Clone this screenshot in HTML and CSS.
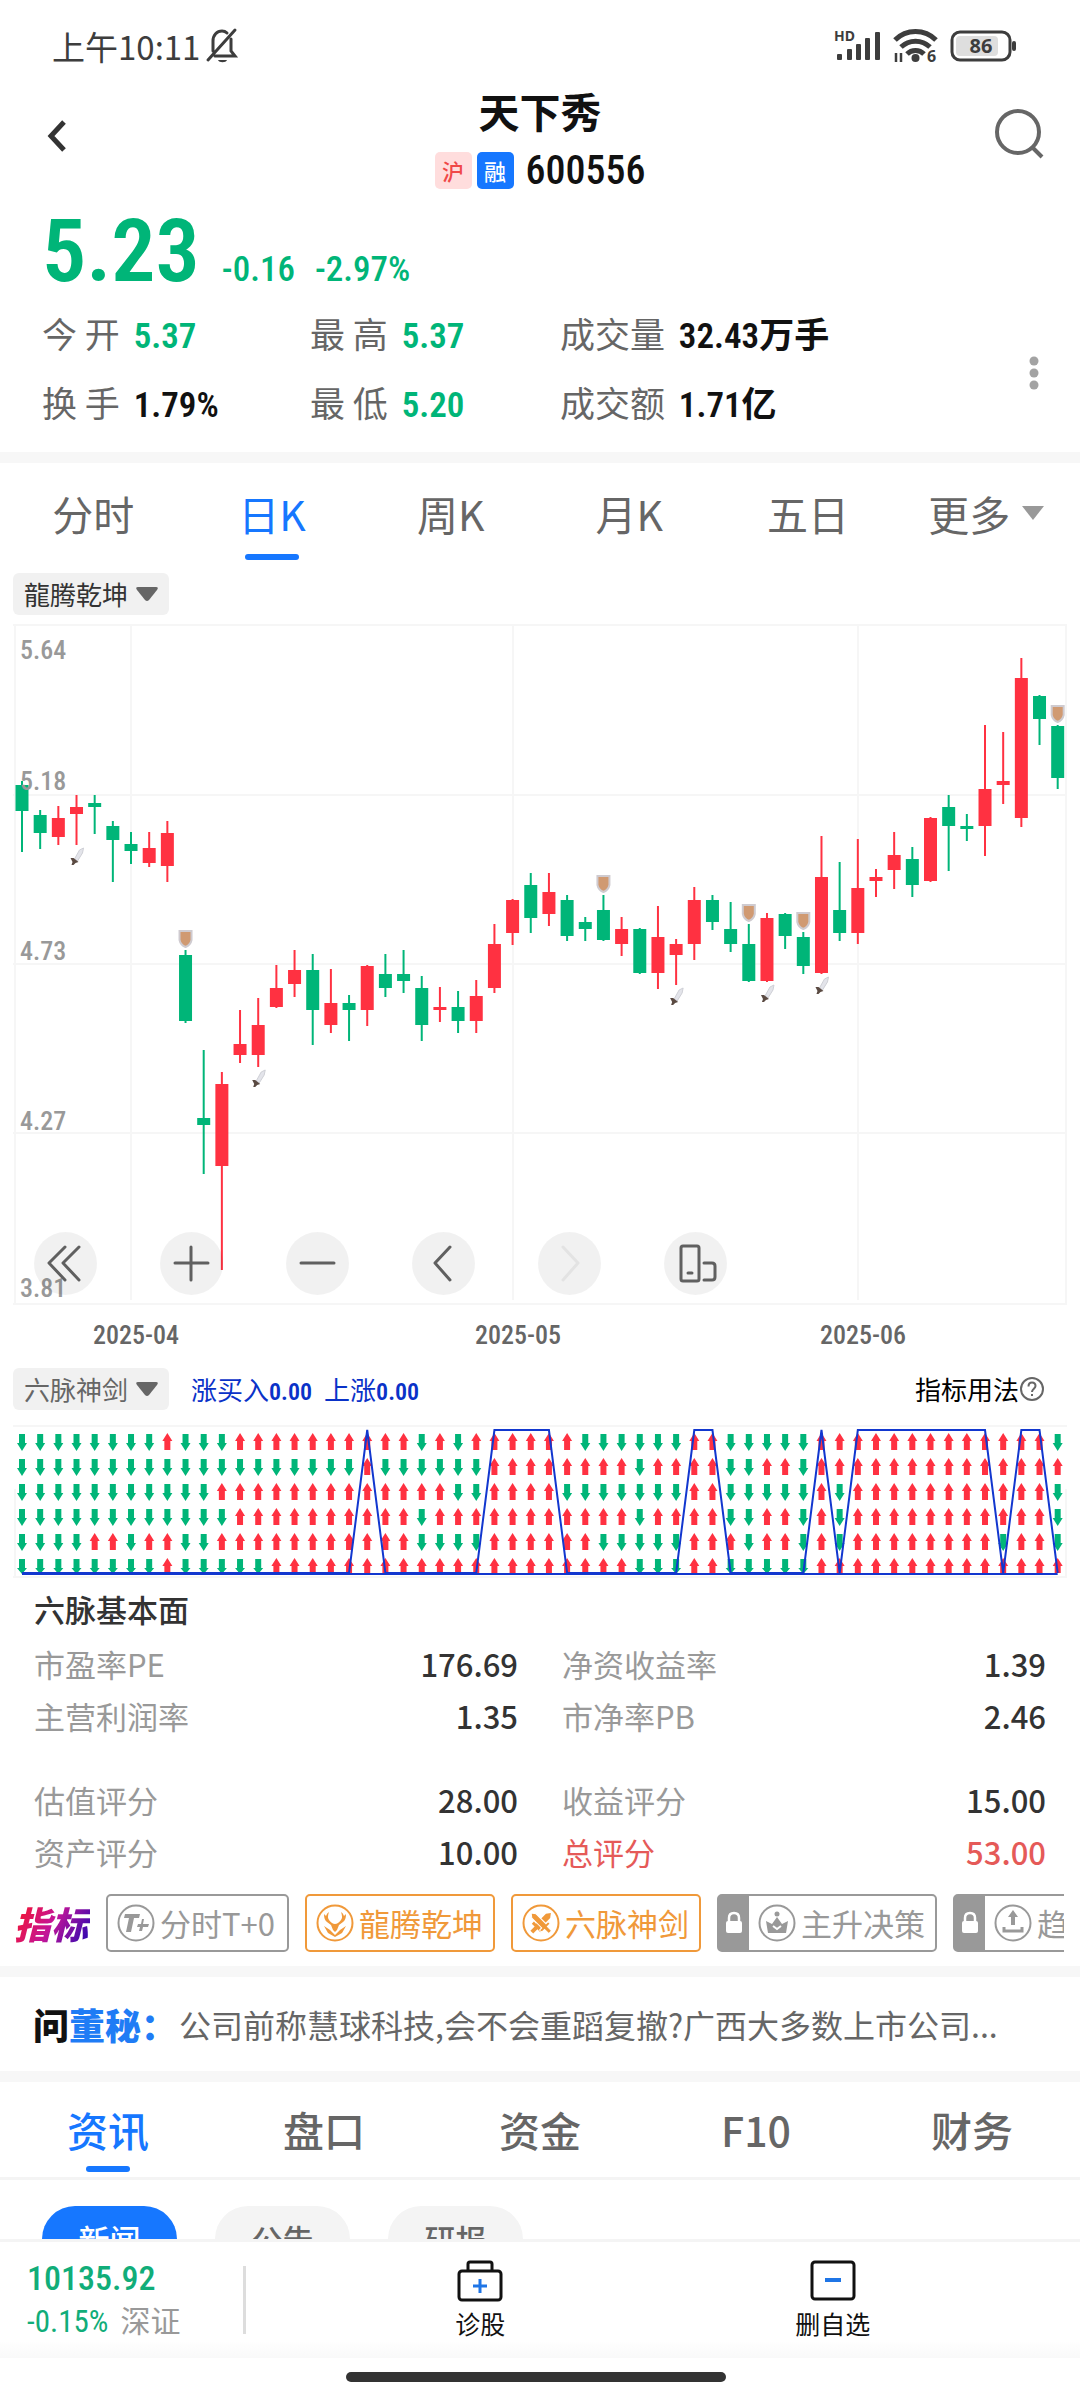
FILE: index.html
```html
<!DOCTYPE html>
<html lang="zh-CN">
<head>
<meta charset="utf-8">
<meta name="viewport" content="width=device-width, initial-scale=1">
<title>天下秀 600556</title>
<link rel="stylesheet" href="styles.css">
</head>
<body>
<div class="app">
  <main class="content">
    <div class="status">
      <span class="status-time">上午10:11</span>
      <svg class="ico" width="36" height="38" viewBox="0 0 36 38" fill="none" stroke="#3d3d3d" stroke-width="3"><path d="M9 24V14c0-6 4-10 9-10 2 0 4 1 5 2M27 12v12l4 5H11M4 33 31 3" stroke-linecap="round"/><path d="M14 33h9c-1 3-8 3-9 0z" fill="#3d3d3d" stroke="none"/></svg>
      <div class="status-right">
        <svg width="48" height="34" viewBox="0 0 48 34" fill="#3d3d3d"><text x="0" y="12" class="hd">HD</text><rect x="3" y="25" width="5" height="6" rx="1"/><rect x="13" y="20" width="5" height="11" rx="1"/><rect x="22" y="15" width="5" height="16" rx="1"/><rect x="31" y="9" width="5" height="22" rx="1"/><rect x="41" y="3" width="5" height="28" rx="1"/></svg>
        <svg width="46" height="36" viewBox="0 0 46 36" fill="none" stroke="#3d3d3d" stroke-width="5"><path d="M2 12a29 29 0 0 1 41 0M8 19a21 21 0 0 1 29 0M14 26a12 12 0 0 1 17 0"/><circle cx="22.500" cy="30" r="4" fill="#3d3d3d" stroke="none"/><path d="M3 25v9M8 34v-9" stroke-width="2.500"/><text x="34" y="34" class="six">6</text></svg>
        <svg width="68" height="32" viewBox="0 0 68 32"><rect x="2" y="2" width="58" height="28" rx="8" fill="none" stroke="#3d3d3d" stroke-width="3"/><rect x="6" y="6" width="42" height="20" rx="4" fill="#dedede"/><rect x="62" y="11" width="4" height="10" rx="2" fill="#3d3d3d"/><text x="31" y="23" text-anchor="middle" class="batt">86</text></svg>
      </div>
    </div>

    <header class="header">
      <button class="icon-btn back" aria-label="返回"><svg width="20" height="32" viewBox="0 0 20 32" fill="none" stroke="#333" stroke-width="5"><path d="M17 2 4 16l13 14"/></svg></button>
      <div class="heading">
        <h1>天下秀</h1>
        <div class="code-row"><span class="badge badge-sh">沪</span><span class="badge badge-rong">融</span><span class="code">600556</span></div>
      </div>
      <button class="icon-btn end" aria-label="搜索"><svg width="52" height="52" viewBox="0 0 52 52" fill="none" stroke="#666" stroke-width="4"><circle cx="25" cy="24" r="21"/><path d="m40 40 9 9"/></svg></button>
    </header>

    <section class="quote">
      <div class="price-row down"><span class="price">5.23</span><span class="chg">-0.16</span><span class="chg">-2.97%</span></div>
      <div class="stats">
        <div class="stat">今 开 <b class="down">5.37</b></div>
        <div class="stat">最 高 <b class="down">5.37</b></div>
        <div class="stat">成交量 <b>32.43万手</b></div>
        <div class="stat">换 手 <b>1.79%</b></div>
        <div class="stat">最 低 <b class="down">5.20</b></div>
        <div class="stat">成交额 <b>1.71亿</b></div>
        <button class="more" aria-label="更多"><svg width="10" height="34" viewBox="0 0 10 34" fill="#a3a3a3"><circle cx="5" cy="5" r="4.500"/><circle cx="5" cy="17" r="4.500"/><circle cx="5" cy="29" r="4.500"/></svg></button>
      </div>
    </section>

    <nav class="tabs period">
      <button class="tab">分时</button>
      <button class="tab on">日K</button>
      <button class="tab">周K</button>
      <button class="tab">月K</button>
      <button class="tab">五日</button>
      <button class="tab">更多<svg class="tri" width="24" height="16" viewBox="0 0 24 16"><path d="M1 1h22L12 15z" fill="#999"/></svg></button>
    </nav>

    <div class="tool-row">
      <button class="chip dark">龍腾乾坤<svg width="22" height="14" viewBox="0 0 22 14"><path d="M2 0h18q3 0 1 3l-8 10q-2 2-4 0L1 3q-2-3 1-3z" fill="#666"/></svg></button>
    </div>
    <div class="chart">
      <svg id="kline" viewBox="0 624 1080 730">
        <g class="grid">
          <path d="M13 625h1054M13 795h1054M13 964h1054M13 1133h1054M13 1304h1054M15 624v680M1066 624v680M131 624v676M513 624v676M858 624v676"/>
        </g>
        <g id="candles"></g>
        <g class="axis">
          <text x="20" y="659">5.64</text><text x="20" y="790">5.18</text><text x="20" y="960">4.73</text><text x="20" y="1130">4.27</text><text x="20" y="1297">3.81</text>
        </g>
        <g class="dates"><text x="136" y="1344">2025-04</text><text x="518" y="1344">2025-05</text><text x="863" y="1344">2025-06</text></g>
      </svg>
      <div class="controls">
        <button aria-label="最早"><svg viewBox="0 0 63 63"><path d="M31 15 15 31l16 17M45 15 29 31l16 17"/></svg></button>
        <button aria-label="放大"><svg viewBox="0 0 63 63"><path d="M15 31h33M31 15v33"/></svg></button>
        <button aria-label="缩小"><svg viewBox="0 0 63 63"><path d="M15 31h33"/></svg></button>
        <button aria-label="向左"><svg viewBox="0 0 63 63"><path d="M38 15 23 31l15 17"/></svg></button>
        <button aria-label="向右" disabled><svg viewBox="0 0 63 63"><path d="m25 15 15 16-15 17"/></svg></button>
        <button aria-label="横屏"><svg viewBox="0 0 63 63"><path d="M19 14h14q2 0 2 2v31q0 2-2 2H19q-2 0-2-2V16q0-2 2-2zM24 41h4M40 31h8q3 0 3 3v11q0 3-3 3h-8"/></svg></button>
      </div>
    </div>

    <div class="tool-row">
      <button class="chip">六脉神剑<svg width="22" height="14" viewBox="0 0 22 14"><path d="M2 0h18q3 0 1 3l-8 10q-2 2-4 0L1 3q-2-3 1-3z" fill="#666"/></svg></button>
      <span class="signal">涨买入<b>0.00</b></span><span class="signal">上涨<b>0.00</b></span>
      <a class="usage" href="#">指标用法<svg width="24" height="24" viewBox="0 0 24 24" fill="none" stroke="#666" stroke-width="2"><circle cx="12" cy="12" r="11"/><path d="M8.500 9.500q0-4 3.500-4t3.500 3.500c0 2.500-3.500 3-3.500 6"/><path d="M12 17v2" /></svg></a>
    </div>
    <svg id="signals" class="signals" viewBox="0 1424 1080 156">
      <path class="frame" d="M13 1426h1054M15 1489v88M1066 1489v88M13 1577h1054"/>
      <g id="arrows"></g>
      <path id="signal-line" class="signal-line"/>
    </svg>

    <section class="basics">
      <h2>六脉基本面</h2>
      <dl class="grid2">
        <div><dt>市盈率PE</dt><dd>176.69</dd></div><div><dt>净资收益率</dt><dd>1.39</dd></div>
        <div><dt>主营利润率</dt><dd>1.35</dd></div><div><dt>市净率PB</dt><dd>2.46</dd></div>
      </dl>
      <dl class="grid2">
        <div><dt>估值评分</dt><dd>28.00</dd></div><div><dt>收益评分</dt><dd>15.00</dd></div>
        <div><dt>资产评分</dt><dd>10.00</dd></div><div class="total"><dt>总评分</dt><dd>53.00</dd></div>
      </dl>
    </section>

    <div class="indicators">
      <span class="ind-logo">指标</span>
      <button class="ind"><svg viewBox="0 0 38 38"><circle cx="19" cy="19" r="17.500" class="ring"/><path d="M8 10h15l-1 4h-5l-3 14h-5l3-14H7z"/><path d="m27 15-1 5h6l-1 3h-5l-1 4h-3l1-4h-3l1-3h3l1-5z"/></svg>分时T+0</button>
      <button class="ind gold"><svg viewBox="0 0 38 38"><circle cx="19" cy="19" r="17.500" class="ring"/><path d="M13 8q-2 5 0 8 3 4 6 4 3 0 6-4 2-3 0-8 2 1 3 4l2-2q0 6-3 8l-4 3-2 5-2 2-2-2-2-5-4-3q-3-2-3-8l2 2q1-3 3-4z"/><path d="m8 22 6 4 5 5 5-5 6-4-4 7-7 4-7-4z"/></svg>龍腾乾坤</button>
      <button class="ind gold"><svg viewBox="0 0 38 38"><circle cx="19" cy="19" r="17.500" class="ring"/><path transform="rotate(45 19 19)" d="m19 5 3 4v14h3v3h-4v6h-4v-6h-4v-3h3V9z"/><path transform="rotate(-45 19 19)" d="m19 5 3 4v14h3v3h-4v6h-4v-6h-4v-3h3V9z" stroke="#fff" stroke-width="1"/></svg>六脉神剑</button>
      <button class="ind locked"><span class="lock"><svg viewBox="0 0 18 22"><path d="M4 10V6q0-5 5-5t5 5v4" fill="none" stroke="#fff" stroke-width="2.500"/><rect x="1" y="9" width="16" height="12" rx="2" fill="#fff"/></svg></span><svg viewBox="0 0 38 38"><circle cx="19" cy="19" r="17.500" class="ring"/><circle cx="19" cy="10" r="2.500"/><path d="m8 17 6 3 5-7 5 7 6-3-2 12H10z"/><path d="m15 22 4 3 4-3" fill="none" stroke="#fff" stroke-width="2"/></svg>主升决策</button>
      <button class="ind locked"><span class="lock"><svg viewBox="0 0 18 22"><path d="M4 10V6q0-5 5-5t5 5v4" fill="none" stroke="#fff" stroke-width="2.500"/><rect x="1" y="9" width="16" height="12" rx="2" fill="#fff"/></svg></span><svg viewBox="0 0 38 38"><circle cx="19" cy="19" r="17.500" class="ring"/><path d="m19 6 5 7h-3v8h-4v-8h-3z"/><path d="M10 23v4h18v-4" fill="none" stroke="#999" stroke-width="3"/></svg>趋</button>
    </div>

    <section class="ask">
      <h2>问<span>董秘：</span></h2>
      <p>公司前称慧球科技,会不会重蹈复撤?广西大多数上市公司...</p>
    </section>

    <nav class="tabs news-tabs">
      <button class="tab on">资讯</button>
      <button class="tab">盘口</button>
      <button class="tab">资金</button>
      <button class="tab">F10</button>
      <button class="tab">财务</button>
    </nav>
    <div class="pills"><button class="pill on">新闻</button><button class="pill">公告</button><button class="pill">研报</button></div>
  </main>

  <footer class="bottom">
    <div class="index">
      <div class="index-val">10135.92</div>
      <div class="index-chg"><span>-0.15%</span> 深证</div>
    </div>
    <div class="actions">
      <button class="action"><svg width="46" height="42" viewBox="0 0 46 42" fill="none" stroke="#111" stroke-width="3"><rect x="2" y="11" width="42" height="29" rx="3"/><path d="M11 11V4q0-2 2-2h20q2 0 2 2v7"/><path d="M23 19v14M16 26h14" stroke="#1f75e6"/></svg>诊股</button>
      <button class="action"><svg width="46" height="42" viewBox="0 0 46 42" fill="none" stroke="#111" stroke-width="3"><rect x="2" y="2" width="42" height="37" rx="3"/><path d="M15 20h16" stroke="#1f75e6" stroke-width="4"/></svg>删自选</button>
    </div>
  </footer>
  <div class="home"><i></i></div>
</div>
<script src="app.js"></script>
</body>
</html>
```
FILE: styles.css
```css
:root {
  --num: "Roboto Condensed", "Liberation Sans Narrow", Roboto, "Noto Sans CJK SC", sans-serif;
  --green: #00b578;
  --red: #ff3141;
  --blue: #1677ff;
  --line: #f7f7f7;
}
* { box-sizing: border-box; }
body { margin: 0; background: #fff; color: #111; font-family: "Noto Sans CJK SC", sans-serif; }
h1, h2, p, dl, dd { margin: 0; }
button { border: 0; padding: 0; background: none; font: inherit; color: inherit; }
svg { display: block; flex: none; overflow: visible; }
.app { display: flex; flex-direction: column; height: 100vh; overflow: hidden; }
.content { flex: 1; min-height: 0; overflow: hidden; }

.status { display: flex; align-items: center; gap: 4px; padding: 26px 62px 17px 52px; line-height: 40px; font-size: 33px; color: #3d3d3d; }
.status-right { display: flex; align-items: center; gap: 11px; margin-left: auto; }
.hd { font: bold 14px "Noto Sans", sans-serif; }
.six { font: bold 16px "Noto Sans", sans-serif; fill: #3d3d3d; stroke: none; }
.batt { font: bold 20px "Noto Sans", sans-serif; fill: #3d3d3d; }

.header { display: grid; grid-template-columns: 1fr auto 1fr; align-items: center; padding: 0 35px; }
.icon-btn { display: flex; justify-self: start; }
.icon-btn.back { padding-left: 12px; }
.icon-btn.end { justify-self: end; padding-bottom: 4px; }
.heading { display: flex; flex-direction: column; align-items: center; gap: 15px; }
.heading h1 { font-size: 41px; line-height: 54px; font-weight: 700; }
.code-row { display: flex; align-items: center; gap: 5px; line-height: 37px; }
.badge { width: 37px; height: 37px; border-radius: 5px; font-size: 22px; font-weight: 500; text-align: center; }
.badge-sh { background: #ffdddd; color: #f04848; }
.badge-rong { background: var(--blue); color: #fff; }
.code { margin-left: 7px; font-family: var(--num); font-size: 40px; font-weight: 500; }

.quote { padding: 14px 42px 26px; border-bottom: 11px solid var(--line); }
.down { color: var(--green); }
.price-row { display: flex; align-items: baseline; gap: 20px; font-family: var(--num); font-weight: 600; }
.price { font-size: 88px; line-height: 96px; margin-right: 2px; }
.chg { font-size: 35px; line-height: 48px; font-weight: 500; }
.stats { position: relative; display: grid; grid-template-columns: 268px 250px 1fr; row-gap: 21px; margin-top: 10px; }
.stat { font-size: 35px; line-height: 48px; color: #666; white-space: nowrap; }
.stat b { margin-left: 6px; font-family: var(--num); font-size: 35px; line-height: 1; font-weight: 600; color: #111; }
.stat b.down { color: var(--green); }
.more { position: absolute; right: -1px; top: 47px; }

.tabs { display: grid; grid-auto-flow: column; grid-auto-columns: 1fr; font-size: 41px; line-height: 60px; color: #666; }
.tab { display: flex; justify-content: center; align-items: center; position: relative; }
.tab.on { color: var(--blue); }
.tab.on::after { content: ""; position: absolute; bottom: 0; height: 6px; border-radius: 3px; background: var(--blue); }
.period { padding: 0 4px; }
.period .tab { padding: 20px 0 17px; }
.period .tab.on::after { width: 54px; }
.tri { margin-left: 11px; }

.tool-row { display: flex; align-items: center; height: 42px; margin: 13px 36px 9px 13px; font-size: 26px; line-height: 42px; }
.chip { display: flex; align-items: center; gap: 8px; height: 42px; padding: 0 11px; border-radius: 6px; background: #f1f1f1; color: #666; line-height: 42px; }
.chip.dark { color: #333; }
.chart { position: relative; }
.chart + .tool-row { margin-top: 14px; }
.chart > svg, .signals { width: 100%; }
.grid path, .frame { stroke: #f6f6f6; stroke-width: 2; fill: none; }
.axis, .dates { font: 500 26px var(--num); fill: #999; }
.dates { fill: #666; text-anchor: middle; }
.up-c { fill: var(--red); stroke: var(--red); }
.down-c { fill: var(--green); stroke: var(--green); }
.controls { position: absolute; left: 34px; bottom: 59px; display: flex; gap: 63px; }
.controls button { width: 63px; height: 63px; border-radius: 50%; background: rgba(0, 0, 0, .055); }
.controls path { fill: none; stroke: #606060; stroke-width: 3; stroke-linecap: round; stroke-linejoin: round; }
.controls button:disabled path { stroke: #e3e3e3; }

.signal { margin-left: 22px; color: #0a32c8; }
.signal + .signal { margin-left: 12px; }
.signal b { font-family: var(--num); font-size: 24px; font-weight: 600; line-height: 1; }
.usage { display: flex; align-items: center; gap: 1px; margin-left: auto; color: #000; text-decoration: none; }
.signals { margin-top: 14px; }
.signal-line { fill: none; stroke: #1237cf; stroke-width: 2; }

.basics { padding: 7px 34px 0; font-size: 31px; }
.basics h2 { font-size: 31px; line-height: 44px; font-weight: 500; color: #333; margin-bottom: 7px; }
.grid2 { display: grid; grid-template-columns: 1fr 1fr; column-gap: 44px; line-height: 52px; }
.grid2 + .grid2 { margin-top: 32px; }
.grid2 div { display: flex; justify-content: space-between; }
.grid2 dt { color: #999; }
.grid2 dd { color: #333; font-weight: 500; }
.grid2 .total > * { color: #e55a58; }

.indicators { display: flex; align-items: center; gap: 16px; margin: 16px 16px 0 14px; padding-bottom: 14px; overflow: hidden; }
.ind-logo { flex: none; white-space: nowrap; font-size: 37px; font-weight: 900; font-style: italic; line-height: 58px; padding-right: 2px; color: transparent; background: linear-gradient(120deg, #f5152d 10%, #c41598 50%, #3708b0 90%); background-clip: text; -webkit-background-clip: text; }
.ind { flex: none; display: flex; align-items: center; gap: 5px; height: 58px; padding: 0 12px 0 9px; border: 2px solid #999; border-radius: 5px; font-size: 31px; line-height: 54px; color: #999; fill: #999; }
.ind > svg { width: 38px; height: 38px; }
.ring { fill: none; stroke: #999; stroke-width: 2; }
.ind.gold { padding-right: 10px; border-color: #f0993a; color: #f0993a; fill: #f0993a; }
.gold .ring { stroke: #f0993a; }
.ind.locked { padding: 0 10px 0 0; }
.lock { display: flex; align-items: center; justify-content: center; width: 30px; height: 54px; margin-right: 4px; background: #999; }
.lock svg { width: 18px; height: 22px; }

.ask { display: flex; align-items: center; gap: 16px; padding: 17px 33px; border-top: 11px solid var(--line); border-bottom: 11px solid var(--line); line-height: 60px; }
.ask h2 { font-size: 36px; font-weight: 900; width: 130px; white-space: nowrap; }
.ask h2 span { color: #1f7cf5; }
.ask p { font-size: 32px; color: #666; white-space: nowrap; }

.news-tabs { border-bottom: 3px solid #f4f4f4; font-weight: 500; }
.news-tabs .tab { padding: 17px 0 18px; }
.news-tabs .tab.on::after { width: 44px; bottom: 5px; }
.pills { display: flex; gap: 38px; padding: 26px 42px; }
.pill { width: 135px; height: 66px; border-radius: 33px; background: #f4f4f4; color: #666; font-size: 31px; font-weight: 500; line-height: 66px; }
.pill.on { background: var(--blue); color: #fff; }

.bottom { display: flex; align-items: center; height: 119px; border-top: 3px solid #f4f4f4; padding: 0 71px 0 27px; background: linear-gradient(#fff 85%, #f9f9f9); }
.index { width: 219px; height: 68px; display: flex; flex-direction: column; justify-content: center; gap: 2px; border-right: 3px solid #ddd; color: #11ad79; font-family: var(--num); }
.index-val { font-size: 34px; font-weight: 500; line-height: 42px; }
.index-chg { display: flex; align-items: center; gap: 12px; font-size: 30px; line-height: 42px; color: #999; }
.index-chg span { font-size: 31px; color: #11ad79; }
.actions { flex: 1; display: grid; grid-template-columns: 1fr 1fr; margin-left: 58px; }
.action { display: flex; flex-direction: column; align-items: center; gap: 3px; font-size: 25px; line-height: 36px; }
.home { display: flex; justify-content: center; align-items: center; height: 42px; padding: 0 8px 5px 0; }
.home i { width: 380px; height: 10px; border-radius: 5px; background: #333; }
```
FILE: app.js
```js
const STEP = 18.17, X0 = 22;
const colX = i => X0 + i * STEP;

// One entry a day: direction, high, body top, body bottom, low, optional marker
const days = `d 781 785 811 852|d 810 815 833 849|u 806 818 837 845|u 795 807 814 845 sword|d 795 803 807 834|d 821 826 840 882|d 832 844 851 864|u 832 848 863 867|u 821 833 866 882|d 950 955 1021 1023 shield|d 1050 1118 1125 1174|u 1072 1084 1166 1270|u 1010 1044 1055 1063|u 998 1025 1055 1067 sword|u 965 988 1007 1008|u 950 970 984 997|d 954 970 1010 1045|u 969 1003 1025 1033|d 995 1003 1010 1041|u 965 966 1010 1026|d 954 974 988 997|d 950 974 981 993|d 976 988 1025 1041|u 987 1007 1010 1022|d 991 1007 1021 1033|u 980 996 1021 1033|u 924 944 988 993|u 899 900 933 945|d 873 885 918 933|u 873 892 914 926|d 895 900 936 941|d 917 922 929 941|d 895 910 940 941 shield|u 917 929 944 956|d 928 929 973 974|u 906 937 973 989|u 939 944 955 985 sword|u 887 900 944 960|d 895 900 922 930|d 902 929 944 952|d 924 944 981 982 shield|u 913 918 981 982 sword|d 913 914 936 949|d 932 937 966 974 shield|u 836 877 973 974 sword|d 862 910 933 941|u 839 888 933 944|u 869 877 881 897|u 832 855 870 889|d 847 859 885 897|u 817 818 881 882|d 795 807 826 871|d 814 826 829 841|u 725 789 826 856|u 732 781 785 804|u 658 678 818 827|d 695 696 719 745|d 725 726 778 789 shield`;

const shapes = {
  shield: (x, high) => `<path transform="translate(${x - 7} ${high - 20})" d="M1 1h12v9q-1 5-6 7-5-2-6-7z" fill="#d09a72" stroke="#cfcbd0" stroke-width="2"/>`,
  sword: (x, high, low) => `<g transform="translate(${x - 6} ${low + 3})"><path d="M4 11 9 2l4-2-1 5-5 8z" fill="#e3e4ea" stroke="#cfd0d6" stroke-width="1"/><path d="m0 10 3 0 5 4-3 1-2 2H1l1-3z" fill="#5a4a42"/></g>`
};
document.getElementById('candles').innerHTML = days.split('|').map((d, i) => {
  const [dir, h, t, b, l, mark] = d.split(' ');
  const x = colX(i);
  return `<g class="${dir === 'u' ? 'up-c' : 'down-c'}" stroke-width="0"><path d="M${x} ${h}V${l}" stroke-width="2"/><rect x="${x - 6.5}" y="${t}" width="13" height="${b - t}"/></g>` +
    (mark ? shapes[mark](x, +h, +l) : '');
}).join('');

// Run lengths of falling (d) and rising (u) readings for the six indicators
const rows = [
  '8d 1u 3d 10u 1d 1u 1d 6u 6d 2u 5d 13u 1d',
  '19d 1u 6d 8u 1d 4u 2d 2u 1d 14u',
  '11d 13u 2d 4u 7d 2u 5d 1u 1d 11u 1d',
  '12d 10u 1d 11u 1d 4u 2d 2u 1d 1u 1d 11u 1d',
  '4d 2u 1d 2u 2d 11u 4d 6u 5d 3u 1d 2u 1d 1u 1d 8u 1d 2u 1d',
  '8d 1u 5d 20u 3d 2u 5d 14u'
].map(r => r.split(' ').map(s => s.slice(-1).repeat(parseInt(s))).join(''));

document.getElementById('arrows').innerHTML = rows.map((r, j) => [...r].map((c, i) => {
  const x = colX(i), y = 1433 + j * 25, last = j === 5;
  return c === 'u'
    ? `<path fill="#ff3141" d="M${x} ${y}l5 8h-2v${last ? 7 : 9}h-6v-${last ? 7 : 9}h-2z"/>`
    : `<path fill="#00b578" d="M${x - 3} ${y + 1}h6v9h2l-5 ${last ? 6 : 8}-5 -${last ? 6 : 8}h2z"/>`;
}).join('')).join('');

const n = rows[0].length;
const pts = Array.from({ length: n }, (_, i) => `${colX(i)} ${rows.every(r => r[i] === 'u') ? 1430 : 1573}`);
document.getElementById('signal-line').setAttribute('d', `M${pts.join('L')}M${colX(0)} 1574H${colX(n - 1)}`);
```
